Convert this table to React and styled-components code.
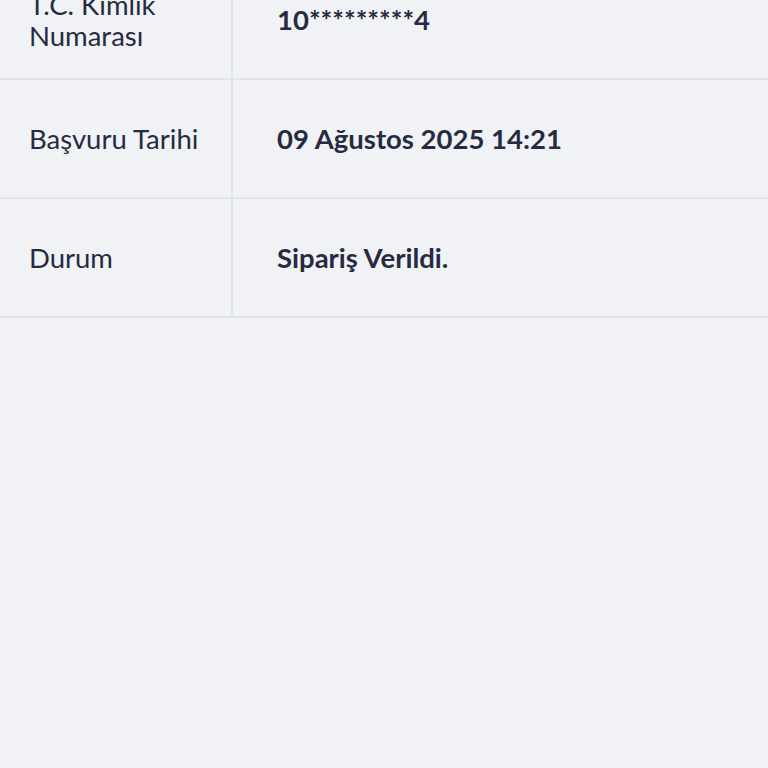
import React from "react";
import styled, { createGlobalStyle } from "styled-components";

const GlobalStyle = createGlobalStyle`
  html, body {
    margin: 0;
    padding: 0;
    background: #f0f2f6;
    overflow: hidden;
  }
  body {
    font-family: Lato, "Noto Sans", "Liberation Sans", sans-serif;
    color: #272b3f;
  }
`;

const rows = [
  { label: "T.C. Kimlik Numarası", value: "10*********4" },
  { label: "Başvuru Tarihi", value: "09 Ağustos 2025 14:21" },
  { label: "Durum", value: "Sipariş Verildi." },
];

const App = () => {
  return (
    <>
      <GlobalStyle />
      <Page>
        <Table>
          {rows.map((row, i) => (
            <Row key={i}>
              <Label>{row.label}</Label>
              <Value>{row.value}</Value>
            </Row>
          ))}
        </Table>
      </Page>
    </>
  );
};

const Page = styled.div`
  width: 768px;
  height: 768px;
  background: #f0f2f6;
`;

// the view is scrolled, so the first row sits partly above the top edge
const Table = styled.div`
  display: flex;
  flex-direction: column;
  margin-top: -39px;
`;

const Row = styled.div`
  display: grid;
  grid-template-columns: 233px 1fr;
  min-height: 117px;
  border-bottom: 2px solid #e1e4e9;
`;

const Label = styled.div`
  display: flex;
  align-items: center;
  padding: 0 24px 0 29px;
  font-size: 27.5px;
  line-height: 31px;
  border-right: 2px solid #e1e4e9;
`;

const Value = styled.div`
  display: flex;
  align-items: center;
  padding: 0 44px;
  font-size: 27.5px;
  font-weight: 700;
  line-height: 31px;
`;

export default App;
